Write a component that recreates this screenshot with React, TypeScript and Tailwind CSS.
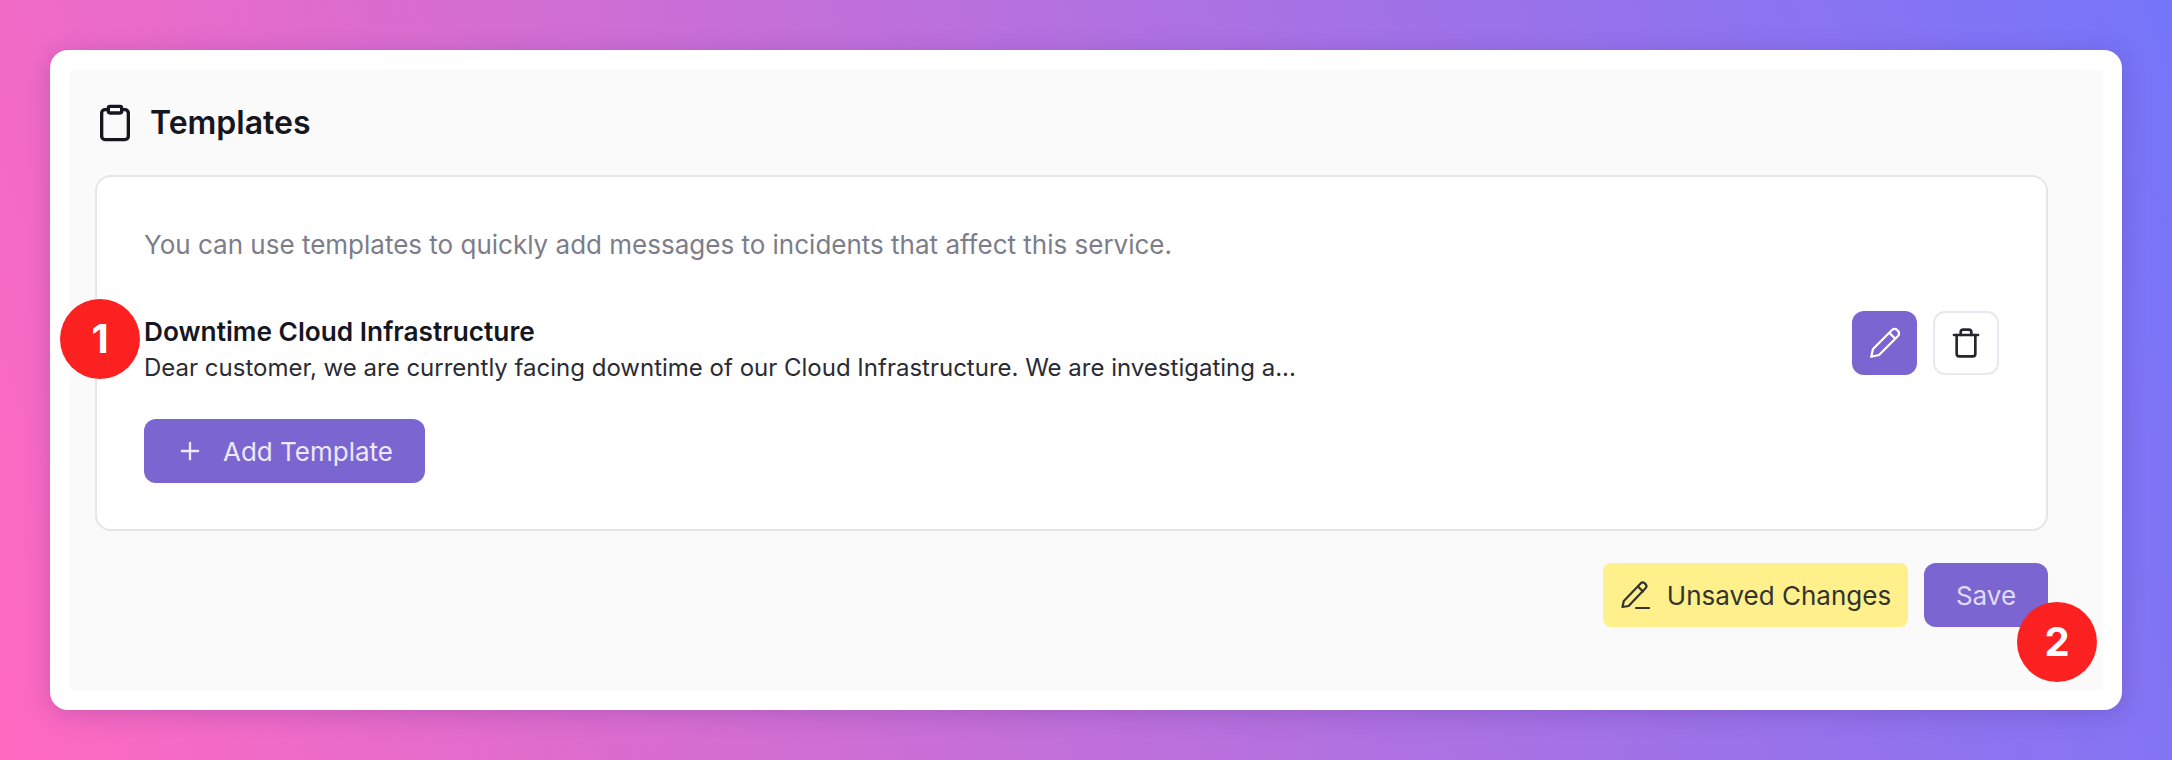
import { Clipboard, Plus, Trash } from "lucide-react";

function Marker({ n, className }: { n: number; className: string }) {
  return (
    <div
      className={`absolute flex h-20 w-20 items-center justify-center rounded-full bg-[#fc2121] text-[40px] font-bold text-white ${className}`}
    >
      {n}
    </div>
  );
}

export default function App() {
  return (
    <div className="h-[760px] w-[2172px] bg-[linear-gradient(72deg,#ff69c0_0%,#b970dd_50%,#7575f9_100%)] p-[50px] font-['Inter',sans-serif]">
      <div className="relative h-[660px] rounded-[18px] bg-white p-5 shadow-[0_4px_24px_rgba(60,30,120,0.22)]">
        <div className="h-[620px] bg-[#fafafa] pt-[33px] pr-[54px] pl-[25px]">
          <div className="flex items-center gap-[15px]">
            <Clipboard className="h-10 w-10 text-[#16161f]" strokeWidth={2} />
            <h2 className="text-[32px] leading-[38px] font-semibold text-[#16161f]">Templates</h2>
          </div>

          <div className="mt-8 h-[356px] rounded-2xl border-2 border-[#e6e6ea] bg-white px-[47px] pt-[48px]">
            <p className="text-[26px] leading-[40px] text-[#7d7d89]">
              You can use templates to quickly add messages to incidents that affect this service.
            </p>

            <div className="mt-[46px] flex items-start justify-between">
              <div className="pt-[2px]">
                <div className="text-[26.25px] leading-[37px] font-semibold text-[#16161f]">Downtime Cloud Infrastructure</div>
                <div className="text-[24px] leading-[36px] text-[#2b2b33]">
                  Dear customer, we are currently facing downtime of our Cloud Infrastructure. We are investigating a...
                </div>
              </div>
              <div className="flex gap-4">
                <button className="flex h-16 w-[65px] items-center justify-center rounded-xl bg-[#7b65d1] text-white">
                  <svg viewBox="0 0 32 32" className="h-10 w-10" fill="none" stroke="currentColor" strokeWidth="1.8" strokeLinejoin="round">
                    <path d="M5 27l1.4-6.2L21.6 5.6a2.9 2.9 0 0 1 4.1 0l.7.7a2.9 2.9 0 0 1 0 4.1L11.2 25.6z" />
                    <path d="M19.4 7.8l4.8 4.8" />
                  </svg>
                </button>
                <button className="flex h-16 w-[66px] items-center justify-center rounded-xl border-2 border-[#e8e8ee] bg-white text-[#26262e]">
                  <Trash className="h-8 w-8" strokeWidth={2} />
                </button>
              </div>
            </div>

            <button className="mt-[33px] flex h-16 w-[281px] items-center justify-center gap-[19px] rounded-xl bg-[#7b65d1] text-[26px] text-[#ece9fb]">
              <Plus className="h-7 w-7" strokeWidth={2} />
              Add Template
            </button>
          </div>

          <div className="mt-[32px] flex justify-end gap-4">
            <div className="flex h-16 w-[305px] items-center justify-center gap-[15px] rounded-lg bg-[#fff08c] text-[26px] text-[#33332f]">
              <svg viewBox="0 0 32 32" className="h-8 w-8" fill="none" stroke="currentColor" strokeWidth="2.2" strokeLinejoin="round" strokeLinecap="round">
                <path d="M2.5 28l1.3-6L20.6 4.4a3 3 0 0 1 4.2 0l.7.7a3 3 0 0 1 0 4.2L8.6 27z" />
                <path d="M18 7.5l5 5" />
                <path d="M16 29h13" />
              </svg>
              Unsaved Changes
            </div>
            <button className="h-16 w-[124px] rounded-xl bg-[#7b65d1] text-[26px] text-[#e0dcf6]">Save</button>
          </div>
        </div>

        <Marker n={1} className="top-[249px] left-[10px]" />
        <Marker n={2} className="top-[552px] left-[1967px]" />
      </div>
    </div>
  );
}
